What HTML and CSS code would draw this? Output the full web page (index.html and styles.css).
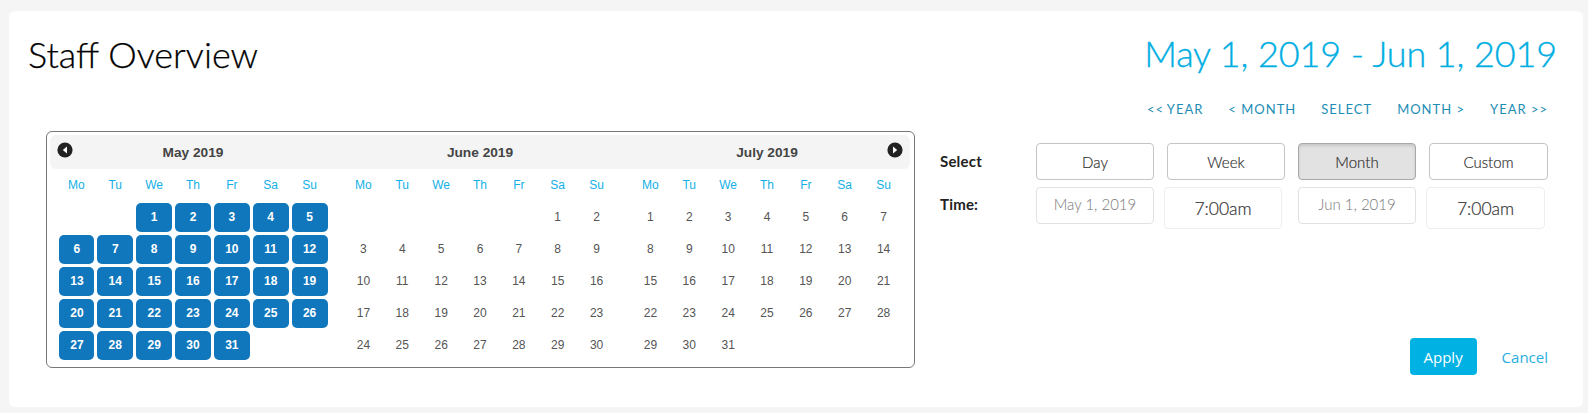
FILE: index.html
```html
<!DOCTYPE html>
<html lang="en">
<head>
<meta charset="utf-8">
<title>Staff Overview</title>
<link rel="stylesheet" href="styles.css">
</head>
<body>
<main class="card">
  <header class="top">
    <h1 class="title">Staff Overview</h1>
    <div class="range">May 1, 2019 - Jun 1, 2019</div>
  </header>
  <nav class="quick">
    <a>&lt;&lt;&#8201;Year</a><a>&lt; Month</a><a>Select</a><a>Month &gt;</a><a>Year &gt;&gt;</a>
  </nav>
  <section class="body">
    <div class="cal">
      <div class="band">
        <svg class="arrow prev" viewBox="0 0 16 16"><circle cx="8" cy="8" r="7.6" fill="#222"/><path d="M10 4.6v6.8L5.8 8z" fill="#fff"/></svg>
        <div class="mname">May 2019</div>
        <div class="mname">June 2019</div>
        <div class="mname">July 2019</div>
        <svg class="arrow next" viewBox="0 0 16 16"><circle cx="8" cy="8" r="7.6" fill="#222"/><path d="M6 4.6v6.8L10.2 8z" fill="#fff"/></svg>
      </div>
      <div class="months">
        <div class="month">
          <span class="wd">Mo</span><span class="wd">Tu</span><span class="wd">We</span><span class="wd">Th</span><span class="wd">Fr</span><span class="wd">Sa</span><span class="wd">Su</span>
          <span class="d"></span><span class="d"></span><span class="d on">1</span><span class="d on">2</span><span class="d on">3</span><span class="d on">4</span><span class="d on">5</span>
          <span class="d on">6</span><span class="d on">7</span><span class="d on">8</span><span class="d on">9</span><span class="d on">10</span><span class="d on">11</span><span class="d on">12</span>
          <span class="d on">13</span><span class="d on">14</span><span class="d on">15</span><span class="d on">16</span><span class="d on">17</span><span class="d on">18</span><span class="d on">19</span>
          <span class="d on">20</span><span class="d on">21</span><span class="d on">22</span><span class="d on">23</span><span class="d on">24</span><span class="d on">25</span><span class="d on">26</span>
          <span class="d on">27</span><span class="d on">28</span><span class="d on">29</span><span class="d on">30</span><span class="d on">31</span><span class="d"></span><span class="d"></span>
        </div>
        <div class="month">
          <span class="wd">Mo</span><span class="wd">Tu</span><span class="wd">We</span><span class="wd">Th</span><span class="wd">Fr</span><span class="wd">Sa</span><span class="wd">Su</span>
          <span class="d"></span><span class="d"></span><span class="d"></span><span class="d"></span><span class="d"></span><span class="d">1</span><span class="d">2</span>
          <span class="d">3</span><span class="d">4</span><span class="d">5</span><span class="d">6</span><span class="d">7</span><span class="d">8</span><span class="d">9</span>
          <span class="d">10</span><span class="d">11</span><span class="d">12</span><span class="d">13</span><span class="d">14</span><span class="d">15</span><span class="d">16</span>
          <span class="d">17</span><span class="d">18</span><span class="d">19</span><span class="d">20</span><span class="d">21</span><span class="d">22</span><span class="d">23</span>
          <span class="d">24</span><span class="d">25</span><span class="d">26</span><span class="d">27</span><span class="d">28</span><span class="d">29</span><span class="d">30</span>
        </div>
        <div class="month">
          <span class="wd">Mo</span><span class="wd">Tu</span><span class="wd">We</span><span class="wd">Th</span><span class="wd">Fr</span><span class="wd">Sa</span><span class="wd">Su</span>
          <span class="d">1</span><span class="d">2</span><span class="d">3</span><span class="d">4</span><span class="d">5</span><span class="d">6</span><span class="d">7</span>
          <span class="d">8</span><span class="d">9</span><span class="d">10</span><span class="d">11</span><span class="d">12</span><span class="d">13</span><span class="d">14</span>
          <span class="d">15</span><span class="d">16</span><span class="d">17</span><span class="d">18</span><span class="d">19</span><span class="d">20</span><span class="d">21</span>
          <span class="d">22</span><span class="d">23</span><span class="d">24</span><span class="d">25</span><span class="d">26</span><span class="d">27</span><span class="d">28</span>
          <span class="d">29</span><span class="d">30</span><span class="d">31</span><span class="d"></span><span class="d"></span><span class="d"></span><span class="d"></span>
        </div>
      </div>
    </div>
    <aside class="panel">
      <div class="row">
        <div class="label">Select</div>
        <div class="cells">
          <button class="btn">Day</button>
          <button class="btn">Week</button>
          <button class="btn active">Month</button>
          <button class="btn">Custom</button>
        </div>
      </div>
      <div class="row second">
        <div class="label">Time:</div>
        <div class="cells">
          <div class="date">May 1, 2019</div>
          <div class="time">7:00am</div>
          <div class="date">Jun 1, 2019</div>
          <div class="time">7:00am</div>
        </div>
      </div>
      <div class="actions">
        <button class="apply">Apply</button>
        <a class="cancel">Cancel</a>
      </div>
    </aside>
  </section>
</main>
</body>
</html>
```
FILE: styles.css
```css
* { box-sizing: border-box; }
html, body { margin: 0; padding: 0; }
body {
  background: #f5f5f5;
  padding: 11px 5px 6px 9px;
  font-family: "Lato", "Liberation Sans", sans-serif;
  overflow: hidden;
}
.card {
  background: #fff;
  border-radius: 6px;
  height: 396px;
  padding: 20px 26px 0 19px;
}
.top {
  display: flex;
  justify-content: space-between;
  align-items: center;
  height: 44px;
}
.title {
  margin: 2px 0 0;
  font-size: 36px;
  font-weight: 300;
  color: #000;
  line-height: 44px;
  -webkit-text-stroke: 0.25px #000;
}
.range {
  font-size: 36px;
  font-weight: 300;
  letter-spacing: -0.12px;
  color: #00aee2;
  line-height: 44px;
  -webkit-text-stroke: 0.35px #00aee2;
}
.quick {
  display: flex;
  justify-content: flex-end;
  gap: 25px;
  height: 20px;
  margin: 24px 9px 12px 0;
  font-size: 13px;
  line-height: 20px;
  letter-spacing: 1px;
  text-transform: uppercase;
  color: #1c8db5;
}
.body {
  display: flex;
  margin-left: 18px;
}
.cal {
  width: 869px;
  height: 237px;
  flex: none;
  border: 1px solid #777;
  border-radius: 6px;
  padding: 3px 4px 6px 3px;
}
.band {
  position: relative;
  display: flex;
  align-items: center;
  gap: 15px;
  height: 34px;
  padding: 0 7px;
  background: #f4f4f4;
  border-radius: 6px;
}
.mname {
  width: 272px;
  flex: none;
  text-align: center;
  font: bold 13.7px "Liberation Sans", Arial, sans-serif;
  color: #444;
}
.arrow {
  position: absolute;
  top: 7px;
  width: 16px;
  height: 16px;
}
.prev { left: 7px; }
.next { right: 7px; }
.months {
  display: flex;
  gap: 15px;
  padding: 0 7px;
}
.month {
  width: 272px;
  flex: none;
  display: grid;
  grid-template-columns: repeat(7, 1fr);
  grid-template-rows: 31px repeat(5, 29px);
  row-gap: 3px;
  font: 12px "Liberation Sans", Arial, sans-serif;
}
.wd {
  color: #12b0e6;
  text-align: center;
  line-height: 32px;
}
.d {
  margin: 0 1.45px;
  text-align: center;
  line-height: 28px;
  color: #555;
  border-radius: 5px;
}
.d.on {
  background: #1077bc;
  color: #fff;
  font-weight: bold;
}
.d.on:nth-child(7n+1) { margin-left: 2.4px; }
.panel {
  margin-left: 25px;
  padding-top: 12px;
  width: 609px;
}
.row {
  display: flex;
}
.second { margin-top: 7px; }
.label {
  width: 96px;
  flex: none;
  font-size: 15px;
  font-weight: 700;
  letter-spacing: 0.2px;
  color: #222;
  line-height: 36px;
}
.second .label { line-height: 34px; }
.cells {
  display: grid;
  grid-template-columns: repeat(3, 118px) 119px;
  column-gap: 13px;
  align-items: start;
}
.btn {
  height: 37px;
  padding: 0;
  background: #fff;
  border: 1px solid #c4c4c4;
  border-radius: 4px;
  font: 300 15px "Lato", sans-serif;
  -webkit-text-stroke: 0.2px #333;
  color: #333;
}
.btn.active {
  background: #e2e2e2;
  border-color: #a8a8a8;
  box-shadow: inset 0 2px 3px rgba(0,0,0,.12);
}
.date {
  height: 37px;
  border: 1px solid #e2e2e2;
  border-radius: 4px;
  text-align: center;
  line-height: 33px;
  font-size: 15px;
  font-weight: 300;
  color: #777;
}
.time {
  height: 42px;
  margin-left: -3px;
  margin-right: 3px;
  border: 1px solid #eee;
  border-radius: 4px;
  text-align: center;
  line-height: 41px;
  font-size: 17.5px;
  font-weight: 300;
  -webkit-text-stroke: 0.2px #333;
  color: #333;
}
.actions {
  display: flex;
  align-items: center;
  justify-content: flex-end;
  margin-top: 109px;
  margin-right: 1px;
  gap: 25px;
}
.apply {
  width: 67px;
  height: 37px;
  padding: 0;
  background: #00b1e4;
  border: 0;
  border-radius: 4px;
  color: #fff;
  font: 15px "Open Sans", sans-serif;
}
.cancel {
  font: 15px "Open Sans", sans-serif;
  color: #2aaee0;
}
```
